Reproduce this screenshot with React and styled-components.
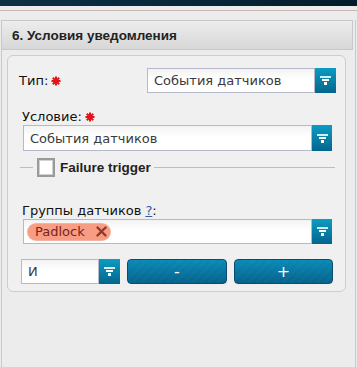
import React from "react";
import styled, {createGlobalStyle} from "styled-components";

const GlobalStyle = createGlobalStyle`
  html, body {
    margin: 0;
    padding: 0;
    background: #ececec;
    font-family: "DejaVu Sans", Verdana, sans-serif;
  }
`;

const TopBar = styled.div`
  height: 6px;
  background: linear-gradient(90deg, #0d3047 0%, #062536 60%, #031b29 100%);
`;

const Rule = styled.div`
  margin-top: 4px;
  height: 1px;
  background: #cbb8b8;
`;

const Layout = styled.div`
  display: flex;
  margin-top: 9px;
  padding-left: 1px;
  height: 347px;
`;

const Panel = styled.div`
  width: 352px;
  border-left: 1px solid #c9c9c9;
  box-sizing: border-box;
  display: flex;
  flex-direction: column;
`;

const RightEdge = styled.div`
  margin-left: 2px;
  flex: 1;
  border-left: 1px solid #c9c9c9;
`;

const Header = styled.div`
  height: 30px;
  box-sizing: border-box;
  margin-left: -1px;
  border: 1px solid #c8c8c8;
  background: linear-gradient(#ededed, #d7d7d7);
  display: flex;
  align-items: center;
  padding-left: 10px;
  font-family: "Liberation Sans", Arial, sans-serif;
  font-weight: bold;
  font-size: 13.5px;
  color: #222;
`;

const Fieldset = styled.div`
  margin: 5px 7px 0 5px;
  height: 237px;
  box-sizing: border-box;
  border: 1px solid #cdcdcd;
  border-radius: 6px;
  background: #f0f0f0;
  padding: 12px 9px 0 12px;
  display: flex;
  flex-direction: column;
`;

const Row = styled.div`
  display: flex;
  align-items: center;
  justify-content: ${p => p.$between ? "space-between" : "flex-start"};
  gap: ${p => p.$gap || 0}px;
  margin-top: ${p => p.$top || 0}px;
`;

const Label = styled.div`
  font-size: 13px;
  color: #111;
  display: flex;
  align-items: center;
  margin-left: ${p => p.$indent || 0}px;
  margin-top: ${p => p.$top || 0}px;
  height: 15px;
`;

const Help = styled.span`
  color: #2a5fa8;
  text-decoration: underline;
  margin-left: 4px;
`;

const SelectWrap = styled.div`
  display: flex;
  width: ${p => p.$width}px;
  height: ${p => p.$height || 25}px;
  margin-left: ${p => p.$indent || 0}px;
  margin-top: ${p => p.$top || 0}px;
`;

const SelectBox = styled.div`
  flex: 1;
  box-sizing: border-box;
  border: 1px solid #b6b9c9;
  background: linear-gradient(#f3f3f3, #ffffff 45%);
  display: flex;
  align-items: center;
  padding-left: ${p => p.$pad || 6}px;
  font-size: 13px;
  color: #3a3a3a;
`;

const SelectButton = styled.div`
  width: ${p => p.$w || 21}px;
  background: linear-gradient(#0c9cc3, #05658c);
  display: flex;
  align-items: center;
  justify-content: center;
`;

const Star = () => (
  <svg width="10" height="10" viewBox="0 0 10 10" style={{marginLeft: 3}}>
    <g stroke="#e0141a" strokeWidth="2">
      <line x1="5" y1="0.5" x2="5" y2="9.5"/>
      <line x1="0.5" y1="5" x2="9.5" y2="5"/>
      <line x1="1.8" y1="1.8" x2="8.2" y2="8.2"/>
      <line x1="8.2" y1="1.8" x2="1.8" y2="8.2"/>
    </g>
  </svg>
);

const FilterIcon = () => (
  <svg width="11" height="9" viewBox="0 0 11 9">
    <rect x="0" y="0" width="11" height="2" fill="#cfeff8"/>
    <rect x="2" y="3" width="7" height="2" fill="#ffffff"/>
    <rect x="4" y="6" width="3" height="3" fill="#ffffff"/>
  </svg>
);

const Select = ({width, height, indent, top, btn, children}) => (
  <SelectWrap $width={width} $height={height} $indent={indent} $top={top}>
    <SelectBox>{children}</SelectBox>
    <SelectButton $w={btn}><FilterIcon/></SelectButton>
  </SelectWrap>
);

const Legend = styled.div`
  display: flex;
  align-items: center;
  margin-top: 7px;
  height: 19px;
`;

const Line = styled.div`
  height: 1px;
  background: #b9bccb;
  width: ${p => p.$w ? p.$w + "px" : "auto"};
  flex: ${p => p.$w ? "none" : 1};
  margin-right: ${p => p.$right || 0}px;
`;

const Checkbox = styled.div`
  width: 18px;
  height: 19px;
  box-sizing: border-box;
  border: 2px solid #9a9a9a;
  box-shadow: inset 0 0 0 1px #d2d2d2;
  background: #fff;
  margin: 0 5px 0 4px;
`;

const LegendText = styled.span`
  font-family: "Liberation Sans", Arial, sans-serif;
  font-weight: bold;
  font-size: 13.5px;
  color: #222;
  margin-right: 3px;
`;

const Tag = styled.div`
  display: flex;
  align-items: center;
  height: 16px;
  padding: 0 3px 0 7px;
  margin-left: -2px;
  border-radius: 8px;
  background: #f89d84;
  box-shadow: 0 0 0 1px #f3b3a2;
  color: #7b2414;
  font-size: 13px;
  gap: 11px;
`;

const RemoveIcon = () => (
  <svg width="11" height="11" viewBox="0 0 11 11">
    <g stroke="#8e3a2a" strokeWidth="2.4" strokeLinecap="round">
      <line x1="1.5" y1="1.5" x2="9.5" y2="9.5"/>
      <line x1="9.5" y1="1.5" x2="1.5" y2="9.5"/>
    </g>
  </svg>
);

const ActionButton = styled.div`
  width: ${p => p.$w}px;
  height: 25px;
  box-sizing: border-box;
  border: 1px solid #0c4b6b;
  border-radius: 4px;
  background:
    repeating-linear-gradient(135deg, rgba(255,255,255,0.018) 0 3px, transparent 3px 6px),
    linear-gradient(#0a8ab7, #05628b);
  color: #fff;
  font-size: 16px;
  display: flex;
  align-items: center;
  justify-content: center;
`;

export default function App() {
  return (
    <>
      <GlobalStyle/>
      <TopBar/>
      <Rule/>
      <Layout>
        <Panel>
          <Header>6. Условия уведомления</Header>
          <Fieldset>
            <Row $between>
              <Label $indent={-1}>Тип:<Star/></Label>
              <Select width={189}>События датчиков</Select>
            </Row>
            <Label $indent={2} $top={16}>Условие:<Star/></Label>
            <Select width={309} height={26} indent={3} top={1} btn={20}>События датчиков</Select>
            <Legend>
              <Line $w={13}/>
              <Checkbox/>
              <LegendText>Failure trigger</LegendText>
              <Line $right={1}/>
            </Legend>
            <Label $indent={2} $top={26}>Группы датчиков<Help>?</Help>:</Label>
            <Select width={309} indent={3} top={1} btn={20}>
              <Tag>Padlock<RemoveIcon/></Tag>
            </Select>
            <Row $gap={7} $top={15}>
              <Select width={99} indent={1}>И</Select>
              <ActionButton $w={100}>-</ActionButton>
              <ActionButton $w={99}>+</ActionButton>
            </Row>
          </Fieldset>
        </Panel>
        <RightEdge/>
      </Layout>
    </>
  );
}
